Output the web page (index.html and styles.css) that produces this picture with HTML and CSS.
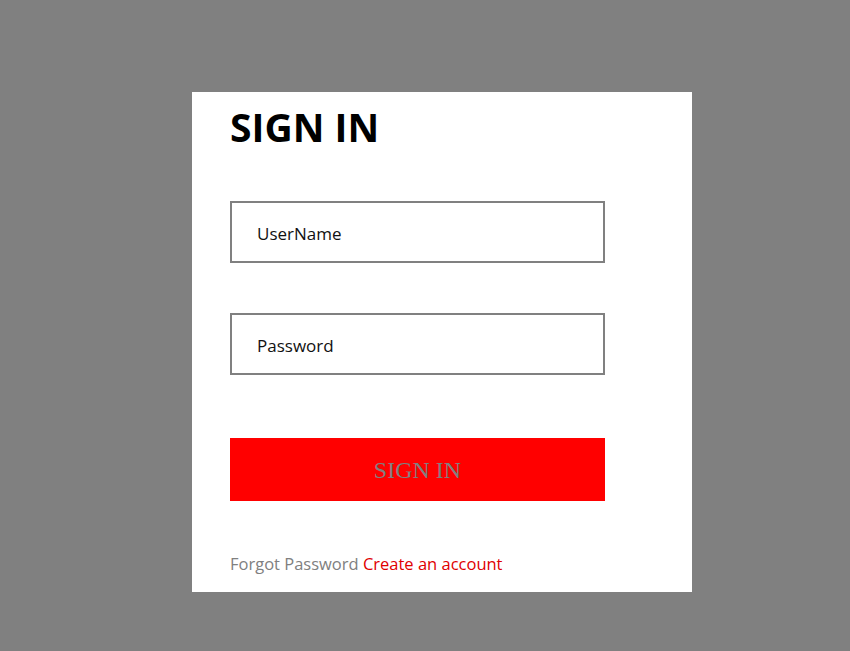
FILE: index.html
```html
<!DOCTYPE html>
<html>
<head>
<meta charset="utf-8">
<link rel="stylesheet" href="styles.css">
</head>
<body>
<div class="card">
  <h1 class="title">SIGN IN</h1>
  <input class="field field-user" type="text" placeholder="UserName">
  <input class="field field-pass" type="password" placeholder="Password">
  <button class="submit">SIGN IN</button>
  <p class="links"><span class="forgot">Forgot Password</span> <span class="create">Create an account</span></p>
</div>
</body>
</html>
```
FILE: styles.css
```css
html, body {
  margin: 0;
  padding: 0;
  background: #808080;
}
body {
  padding: 92px 0 0 192px;
  height: 651px;
  box-sizing: border-box;
}
.card {
  width: 500px;
  height: 500px;
  background: #fff;
  box-sizing: border-box;
  padding: 0 0 0 38px;
  display: flex;
  flex-direction: column;
  font-family: "Open Sans", "Noto Sans", sans-serif;
}
.title {
  margin: 8px 0 0 0;
  font-size: 39px;
  font-weight: 700;
  line-height: 54px;
  color: #000;
}
.field {
  width: 375px;
  height: 62px;
  box-sizing: border-box;
  border: 2px solid #808080;
  padding: 2px 0 0 25px;
  font-family: "Open Sans", sans-serif;
  font-size: 17px;
  color: #000;
  outline: none;
  background: #fff;
}
.field::placeholder {
  color: #111;
}
.field-user {
  margin-top: 47px;
}
.field-pass {
  margin-top: 50px;
}
.submit {
  margin-top: 63px;
  width: 375px;
  height: 63px;
  border: none;
  background: #ff0000;
  color: #808080;
  font-family: "Liberation Serif", serif;
  font-size: 24px;
  padding: 2px 0 0 0;
}
.links {
  margin: 51px 0 0 0;
  font-size: 16.5px;
  line-height: 24px;
}
.forgot {
  color: #808080;
}
.create {
  color: #e00000;
}
```
